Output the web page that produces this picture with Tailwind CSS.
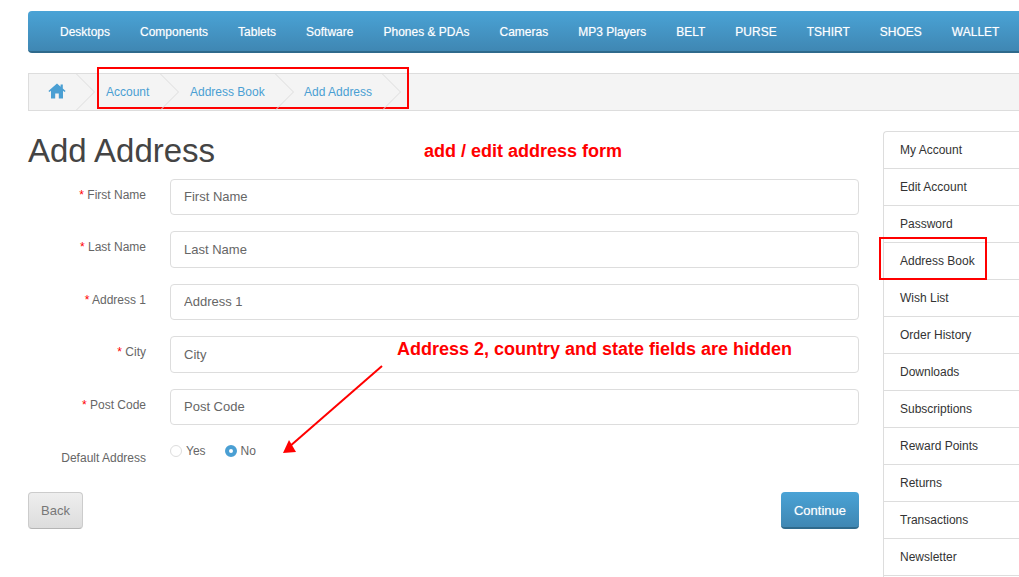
<!DOCTYPE html>
<html lang="en">
<head>
<meta charset="utf-8">
<title>Add Address</title>
<script src="https://cdn.jsdelivr.net/npm/@tailwindcss/browser@4"></script>
</head>
<body class="relative h-[577px] w-[1019px] overflow-hidden bg-white font-['Liberation_Sans',Arial,sans-serif] text-[12px] text-[#666]">
<div class="ml-[28px] w-[1140px] pt-[11px]">
  <nav class="flex h-[42px] items-center gap-[30px] rounded-[4px] border-b-2 border-[#2f6a8c] bg-gradient-to-b from-[#4aa3d6] to-[#3f87b3] pl-[32px] pt-[2px] text-white [text-shadow:0_0_1px_rgba(255,255,255,0.5)]">
    <span>Desktops</span><span>Components</span><span>Tablets</span><span>Software</span><span>Phones &amp; PDAs</span><span>Cameras</span><span>MP3 Players</span><span>BELT</span><span>PURSE</span><span>TSHIRT</span><span>SHOES</span><span>WALLET</span>
  </nav>

  <ul class="mt-[20px] flex h-[38px] items-center border border-[#ddd] bg-[#f4f4f4] text-[#4a9fd3]">
    <li class="relative flex h-full w-[48px] items-center pl-[19px]">
      <svg class="-mt-[2px] h-[16px] w-[18px] text-[#4a9fd3]" viewBox="0 0 18 16" fill="currentColor"><path d="M9 0.5 L0.4 8 L1.4 9.1 L3 7.8 V15.5 H7.2 V10.5 H10.8 V15.5 H15 V7.8 L16.6 9.1 L17.6 8 L14.8 5.6 V1.4 H12.6 V3.7 Z"/></svg>
      <svg class="absolute right-[-19px] top-0 z-10 h-[36px] w-[20px]" viewBox="0 0 20 36" fill="none" stroke="#ddd"><path d="M0.5 0 L18.5 18 L0.5 36"/></svg>
    </li>
    <li class="relative flex h-full w-[84px] items-center pl-[29px]">Account
      <svg class="absolute right-[-19px] top-0 z-10 h-[36px] w-[20px]" viewBox="0 0 20 36" fill="none" stroke="#ddd"><path d="M0.5 0 L18.5 18 L0.5 36"/></svg>
    </li>
    <li class="relative flex h-full w-[115px] items-center pl-[29px]">Address Book
      <svg class="absolute right-[-19px] top-0 z-10 h-[36px] w-[20px]" viewBox="0 0 20 36" fill="none" stroke="#ddd"><path d="M0.5 0 L18.5 18 L0.5 36"/></svg>
    </li>
    <li class="relative flex h-full w-[107px] items-center pl-[28px]">Add Address
      <svg class="absolute right-[-19px] top-0 z-10 h-[36px] w-[20px]" viewBox="0 0 20 36" fill="none" stroke="#ddd"><path d="M0.5 0 L18.5 18 L0.5 36"/></svg>
    </li>
  </ul>

  <div class="mt-[20px] flex gap-[24px]">
    <main class="w-[831px] shrink-0">
      <h1 class="h-[47.75px] pt-[1px] text-[33px] leading-[38px] font-normal text-[#444]">Add Address</h1>
      <form>
        <div class="mb-[16px] flex h-[36.5px]"><label class="w-[118px] pt-[9px] text-right leading-[14px]"><span class="text-[#f00]">*</span> First Name</label><input class="ml-[24px] h-full w-[689px] rounded-[4px] border border-[#ddd] px-[13px] pb-[1px] text-[13px] placeholder:text-[#666]" placeholder="First Name"></div>
        <div class="mb-[16px] flex h-[36.5px]"><label class="w-[118px] pt-[9px] text-right leading-[14px]"><span class="text-[#f00]">*</span> Last Name</label><input class="ml-[24px] h-full w-[689px] rounded-[4px] border border-[#ddd] px-[13px] pb-[1px] text-[13px] placeholder:text-[#666]" placeholder="Last Name"></div>
        <div class="mb-[16px] flex h-[36.5px]"><label class="w-[118px] pt-[9px] text-right leading-[14px]"><span class="text-[#f00]">*</span> Address 1</label><input class="ml-[24px] h-full w-[689px] rounded-[4px] border border-[#ddd] px-[13px] pb-[1px] text-[13px] placeholder:text-[#666]" placeholder="Address 1"></div>
        <div class="mb-[16px] flex h-[36.5px]"><label class="w-[118px] pt-[9px] text-right leading-[14px]"><span class="text-[#f00]">*</span> City</label><input class="ml-[24px] h-full w-[689px] rounded-[4px] border border-[#ddd] px-[13px] pb-[1px] text-[13px] placeholder:text-[#666]" placeholder="City"></div>
        <div class="mb-[16px] flex h-[36.5px]"><label class="w-[118px] pt-[9px] text-right leading-[14px]"><span class="text-[#f00]">*</span> Post Code</label><input class="ml-[24px] h-full w-[689px] rounded-[4px] border border-[#ddd] px-[13px] pb-[1px] text-[13px] placeholder:text-[#666]" placeholder="Post Code"></div>
        <div class="flex h-[50.25px]">
          <span class="w-[118px] pt-[10px] text-right leading-[14px]">Default Address</span>
          <div class="ml-[24px] flex h-[14px] items-start pt-[4px]">
            <span class="h-[12px] w-[12px] rounded-full border border-[#ddd] bg-white"></span>
            <span class="ml-[4px] leading-[12px]">Yes</span>
            <span class="ml-[19px] h-[12px] w-[12px] rounded-full border-[4px] border-[#4a9fd3] bg-white"></span>
            <span class="ml-[4px] leading-[12px]">No</span>
          </div>
        </div>
        <div class="flex justify-between">
          <button type="button" class="h-[37px] w-[55px] rounded-[4px] border border-[#ccc] border-b-[#b5b5b5] bg-gradient-to-b from-[#eee] to-[#ddd] pt-[1px] text-[13px] text-[#777]">Back</button>
          <button type="button" class="h-[37px] w-[78px] rounded-[4px] border-b-2 border-[#2f6a8c] bg-gradient-to-b from-[#4aa3d6] to-[#3f87b3] pt-[3px] text-[13px] text-white [text-shadow:0_0_1px_rgba(255,255,255,0.5)]">Continue</button>
        </div>
      </form>
    </main>
    <aside class="w-[285px] shrink-0 rounded-tl-[4px] border-l border-t border-[#ddd] text-[#333]">
      <div class="flex h-[37px] items-center border-b border-[#ddd] pl-[16px]">My Account</div>
      <div class="flex h-[37px] items-center border-b border-[#ddd] pl-[16px]">Edit Account</div>
      <div class="flex h-[37px] items-center border-b border-[#ddd] pl-[16px]">Password</div>
      <div class="flex h-[37px] items-center border-b border-[#ddd] pl-[16px]">Address Book</div>
      <div class="flex h-[37px] items-center border-b border-[#ddd] pl-[16px]">Wish List</div>
      <div class="flex h-[37px] items-center border-b border-[#ddd] pl-[16px]">Order History</div>
      <div class="flex h-[37px] items-center border-b border-[#ddd] pl-[16px]">Downloads</div>
      <div class="flex h-[37px] items-center border-b border-[#ddd] pl-[16px]">Subscriptions</div>
      <div class="flex h-[37px] items-center border-b border-[#ddd] pl-[16px]">Reward Points</div>
      <div class="flex h-[37px] items-center border-b border-[#ddd] pl-[16px]">Returns</div>
      <div class="flex h-[37px] items-center border-b border-[#ddd] pl-[16px]">Transactions</div>
      <div class="flex h-[37px] items-center border-b border-[#ddd] pl-[16px]">Newsletter</div>
      <div class="h-[37px]"></div>
    </aside>
  </div>
</div>

<!-- annotations drawn over the page -->
<div class="absolute left-[97px] top-[67px] h-[42px] w-[312px] border-2 border-[#f00]"></div>
<div class="absolute left-[879px] top-[237px] h-[43px] w-[108px] border-2 border-[#f00]"></div>
<div class="absolute left-[424px] top-[140px] text-[18px] leading-[22px] font-bold text-[#f00]">add / edit address form</div>
<div class="absolute left-[397px] top-[338px] text-[18px] leading-[22px] font-bold text-[#f00]">Address 2, country and state fields are hidden</div>
<svg class="absolute left-[275px] top-[360px] h-[100px] w-[112px]" viewBox="0 0 112 100" fill="#f00" stroke="none">
  <path d="M107 6 L14 87" stroke="#f00" stroke-width="2" fill="none"/>
  <path d="M8 93 L14 80 L21 92 Z"/>
</svg>
</body>
</html>
